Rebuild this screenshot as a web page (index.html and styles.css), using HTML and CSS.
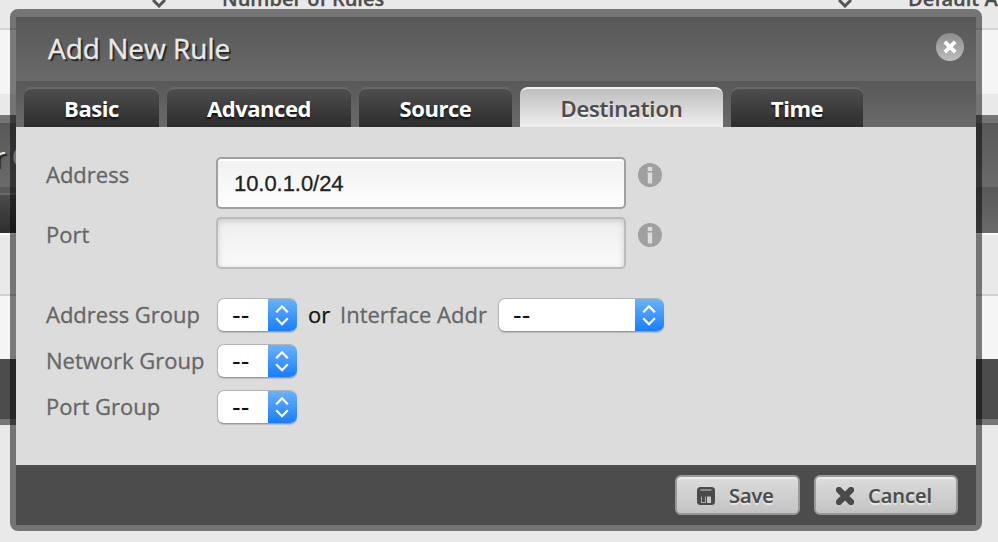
FILE: index.html
```html
<!DOCTYPE html>
<html lang="en">
<head>
<meta charset="utf-8">
<title>Add New Rule</title>
<link rel="stylesheet" href="styles.css">
</head>
<body>
<svg class="defs" width="0" height="0" aria-hidden="true">
  <symbol id="updown" viewBox="0 0 14 22"><path d="M1.200 8.300 7 2.300l5.800 6M1.200 14.200 7 20.200l5.800-6" fill="none" stroke="#fff" stroke-width="2.300"/></symbol>
  <symbol id="info" viewBox="0 0 24 24"><circle cx="12" cy="12" r="12" fill="#a0a0a0"/><path d="M9.800 4h4.400v4H9.800zM9.500 9.500h4.700V20.500H9.800v-9.500h-.3z" fill="#dcdcdc"/></symbol>
  <symbol id="sort" viewBox="0 0 14 8"><path d="M1 0l6 6 6-6" fill="none" stroke="#555" stroke-width="3"/></symbol>
</svg>
<div class="page">
  <div class="columns">
    <svg class="sort"><use href="#sort"/></svg>
    <span class="col rules">Number of Rules</span>
    <svg class="sort"><use href="#sort"/></svg>
    <span class="col">Default Action</span>
  </div>
  <div class="row first"></div>
  <div class="gap"></div>
  <div class="edge"></div>
  <div class="panel-head">r C</div>
  <div class="panel-tabs"><div class="panel-tab"></div></div>
  <div class="panel-columns"></div>
  <div class="row second"></div>
  <div class="panel-foot"></div>
</div>

<div class="dialog">
  <header class="head">
    <h1>Add New Rule</h1>
    <svg class="close" viewBox="0 0 28 28"><defs><linearGradient id="g" x2="0" y2="1"><stop stop-color="#8c8c8c"/><stop offset="1" stop-color="#bdbdbd"/></linearGradient></defs><circle cx="14" cy="14" r="14" fill="url(#g)"/><path d="M8.800 8.800l10.400 10.400M19.200 8.800L8.800 19.200" stroke="#fff" stroke-width="3.800"/></svg>
  </header>
  <nav class="tabs">
    <a class="tab basic">Basic</a>
    <a class="tab advanced">Advanced</a>
    <a class="tab source">Source</a>
    <a class="tab destination active">Destination</a>
    <a class="tab time">Time</a>
  </nav>
  <main class="form">
    <div class="field"><label>Address</label><div class="input focus">10.0.1.0/24</div><svg class="info"><use href="#info"/></svg></div>
    <div class="field"><label>Port</label><div class="input"></div><svg class="info"><use href="#info"/></svg></div>
    <div class="groups">
      <div class="group"><label>Address Group</label><div class="select"><span>--</span><i><svg><use href="#updown"/></svg></i></div><b class="or">or</b><label class="iface">Interface Addr</label><div class="select wide"><span>--</span><i><svg><use href="#updown"/></svg></i></div></div>
      <div class="group"><label>Network Group</label><div class="select"><span>--</span><i><svg><use href="#updown"/></svg></i></div></div>
      <div class="group"><label>Port Group</label><div class="select"><span>--</span><i><svg><use href="#updown"/></svg></i></div></div>
    </div>
  </main>
  <footer class="foot">
    <div class="button save"><svg viewBox="0 0 18 18"><rect width="18" height="18" rx="3.500" fill="#4a4a4a"/><path d="M3.500 2h11v2h-11z" fill="#8c8c8c"/><path d="M4 9.500h1V16H4zM8 9.500h1V16H8zM5 15h3v1H5z" fill="#aaa"/><path d="M10 9.500h4V16h-4z" fill="#c8c8c8"/></svg><span>Save</span></div>
    <div class="button cancel"><svg viewBox="0 0 18 18"><path d="M3 3l12 12M15 3L3 15" stroke="#4a4a4a" stroke-width="6.200"  stroke-linecap="round"/></svg><span>Cancel</span></div>
  </footer>
</div>
</body>
</html>
```
FILE: styles.css
```css
* { box-sizing: border-box; }
html, body { margin: 0; height: 542px; overflow: hidden; }
body { position: relative; background: #e9e9e9; font: 22px/30px "Open Sans", "Noto Sans", sans-serif; color: #666; }
.defs { position: absolute; }
svg { display: block; flex: none; }

.columns { display: flex; height: 30px; border-bottom: 2px solid #d4d4d4; padding-left: 152px; overflow: hidden; white-space: nowrap; }
.sort { width: 14px; height: 8px; }
.col { flex: none; margin: -16px 0 0 56px; color: #4c4c4c; font-size: 20px; font-weight: 600; -webkit-text-stroke: .3px; }
.rules { width: 616px; }
.row { background: #f5f5f5; }
.first { height: 64px; }
.gap { height: 21px; }
.edge { height: 8px; background: #757575; }
.panel-head { height: 64px; padding-top: 18px; text-indent: -6px; background: linear-gradient(#585858, #6a6a6a); color: #e9e9e9; font-size: 28px; text-shadow: 2px 2px 1px #222; white-space: nowrap; word-spacing: -1px; }
.panel-tabs { height: 46px; padding-top: 6px; background: linear-gradient(#585858, #6a6a6a); }
.panel-tab { width: 100px; height: 40px; border-top: 2px solid #696969; background: linear-gradient(#4c4c4c, #2d2d2d); }
.panel-columns { height: 63px; border-top: 2px solid #fafafa; border-bottom: 2px solid #d0d0d0; }
.second { height: 63px; }
.panel-foot { height: 66px; background: #4c4c4c; border-bottom: 6px solid #757575; }

.dialog { position: absolute; left: 10px; top: 9px; width: 972px; height: 522px; border: 6px solid rgba(0, 0, 0, .5); border-top-width: 8px; border-radius: 8px; background-clip: padding-box; display: flex; flex-direction: column; }
.head { display: flex; justify-content: space-between; height: 64px; padding: 14px 12px 0 32px; background: linear-gradient(#585858, #6a6a6a); }
h1 { margin: 0; font-size: 28px; line-height: 34px; font-weight: 400; color: #e9e9e9; text-shadow: 2px 2px 1px #222; -webkit-text-stroke: .4px; }
.close { width: 28px; height: 28px; margin-top: 2px; }
.tabs { display: flex; gap: 8px; height: 46px; padding: 6px 8px 0; background: linear-gradient(#585858, #6a6a6a); }
.tab { height: 40px; border-top: 2px solid #696969; border-radius: 8px 8px 0 0; background: linear-gradient(#4e4e4e, #2d2d2d); color: #fff; font-weight: 700; line-height: 38px; letter-spacing: -.45px; text-align: center; text-shadow: 0 2px 2px #111; }
.basic { width: 135px; }
.advanced { width: 184px; }
.source { width: 153px; }
.destination { width: 203px; }
.time { width: 132px; }
.active { border-top-color: #f1f1f1; background: linear-gradient(#bfbfbf, #efefef); color: #4c4c4c; font-weight: 600; letter-spacing: -.1px; text-shadow: 0 2px 1px #f4f4f4; -webkit-text-stroke: .2px; }

.form { height: 338px; padding: 30px 30px 0; background: #dcdcdc; }
.form label { -webkit-text-stroke: .3px; }
.field { display: flex; height: 60px; }
.field label { width: 170px; padding-top: 2px; }
.input { width: 410px; height: 52px; padding: 0 16px; border: 2px solid #bbb; border-radius: 5px; background: linear-gradient(#eee, #fafafa); box-shadow: inset 0 2px 6px #ccc; color: #222; font: 22px/50px "Liberation Sans", sans-serif; letter-spacing: -.05px; -webkit-text-stroke: .3px; }
.focus { border-color: #a0a0a0; box-shadow: inset 0 2px #fff; background: linear-gradient(#f1f1f1, #fdfdfd); }
.info { width: 24px; height: 24px; margin: 6px 0 0 12px; }
.groups { display: grid; gap: 12px; padding-top: 21px; }
.group { display: flex; height: 34px; line-height: 32px; }
.group label { width: 171px; white-space: nowrap; }
.select { display: flex; width: 80px; height: 34px; border: 1px solid #b4b4b4; border-right: 0; border-bottom-color: #999; border-radius: 7px; background: #fff; box-shadow: 0 1px 1px rgba(0, 0, 0, .15); overflow: hidden; color: #111; }
.select span { flex: 1; padding-left: 14px; font: 26px/33px "Liberation Sans", sans-serif; }
.select i { width: 29px; margin: -1px 0; background: linear-gradient(#6eb3fa, #157cfe); padding: 6px 7px; }
.select i svg { width: 14px; height: 22px; }
.wide { width: 166px; }
.or { margin-left: 11px; width: 32px; font-weight: 400; color: #111; -webkit-text-stroke: .25px; }
.group .iface { width: 158px; }

.foot { display: flex; justify-content: flex-end; gap: 14px; height: 60px; padding: 10px 18px; background: #4c4c4c; }
.button { display: flex; align-items: center; height: 40px; padding: 1px 0 0 20px; border: 2px solid #999; border-radius: 6px; background: linear-gradient(#dcdcdc, #c3c3c3); box-shadow: inset 0 2px #ebebeb; color: #4c4c4c; font-size: 20px; font-weight: 600; text-shadow: 0 2px 1px #ececec; -webkit-text-stroke: .2px; }
.button svg { width: 18px; height: 18px; margin-right: 14px; }
.save { width: 125px; }
.cancel { width: 144px; }
```
